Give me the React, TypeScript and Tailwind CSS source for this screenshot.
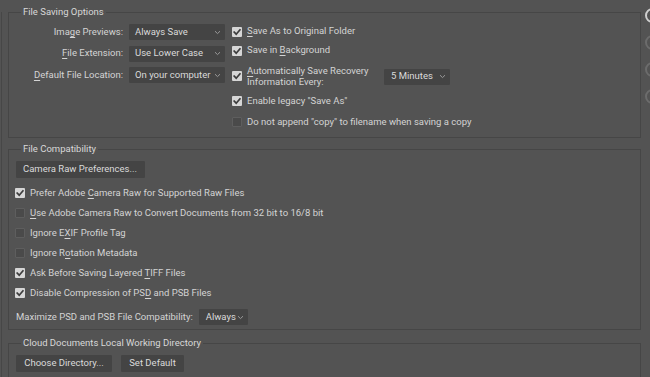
import React from "react";

const U = ({ children }: { children: React.ReactNode }) => (
  <span className="underline decoration-1 underline-offset-[1.5px]">{children}</span>
);

function Check({ checked }: { checked: boolean }) {
  return checked ? (
    <span className="flex h-[10px] w-[10px] shrink-0 items-center justify-center rounded-[1px] bg-[#d6d6d6]">
      <svg width="10" height="10" viewBox="0 0 10 10">
        <path d="M2.2 5.1 L4.2 7.2 L7.9 2.9" fill="none" stroke="#3c3c3c" strokeWidth="1.7" strokeLinecap="square" />
      </svg>
    </span>
  ) : (
    <span className="h-[10px] w-[10px] shrink-0 rounded-[1px] border border-[#5e5e5e] bg-[#4a4a4a]" />
  );
}

function Chevron() {
  return (
    <svg width="7" height="5" viewBox="0 0 7 5" className="shrink-0">
      <path d="M1 1.2 L3.5 3.6 L6 1.2" fill="none" stroke="#9a9a9a" strokeWidth="1" />
    </svg>
  );
}

function Select({ label, w, pl = 6 }: { label: string; w: string; pl?: number }) {
  return (
    <div
      className={`flex h-[16px] ${w} items-center justify-between rounded-[1px] bg-[#444444] pr-[4px] text-[#dadada]`}
      style={{ paddingLeft: pl }}
    >
      <span className="whitespace-nowrap">{label}</span>
      <Chevron />
    </div>
  );
}

function Group({
  title,
  className,
  children,
}: {
  title: string;
  className: string;
  children: React.ReactNode;
}) {
  return (
    <div className={`relative border border-[#464646] ${className}`}>
      <span className="absolute -top-[7px] left-[12px] bg-[#535353] px-[2px] leading-[12px] text-[#d8d8d8]">
        {title}
      </span>
      {children}
    </div>
  );
}

function CheckRow({ checked, children, h }: { checked: boolean; children: React.ReactNode; h: string }) {
  return (
    <div className={`flex ${h} items-center gap-[5px] pl-[6px]`}>
      <Check checked={checked} />
      <span className="whitespace-nowrap">{children}</span>
    </div>
  );
}

export default function App() {
  return (
    <div className="relative h-[377px] w-[650px] overflow-hidden bg-[#535353] font-[Roboto,sans-serif] text-[9.5px] text-[#d4d4d4]">
      <div className="ml-[1px] h-full border-l border-[#474747] pl-[6px]">
        {/* File Saving Options */}
        <Group title="File Saving Options" className="mt-[12px] h-[126px] w-[633px]">
          <div className="flex pt-[11px]">
            <div className="flex flex-col gap-[5.5px]">
              {[
                [<>Ima<U>g</U>e Previews:</>, "Always Save"],
                [<><U>F</U>ile Extension:</>, "Use Lower Case"],
                [<><U>D</U>efault File Location:</>, "On your computer"],
              ].map(([l, v], i) => (
                <div key={i} className="flex h-[16px] items-center">
                  <span className="w-[115px] whitespace-nowrap pr-[1px] text-right">{l}</span>
                  <div className="ml-[5px]">
                    <Select label={v as string} w="w-[96px]" />
                  </div>
                </div>
              ))}
            </div>
            <div className="ml-[1px] -mt-[2px] flex flex-col">
              <CheckRow checked h="h-[19px]">
                <U>S</U>ave As to Original Folder
              </CheckRow>
              <CheckRow checked h="h-[19px]">
                Save in <U>B</U>ackground
              </CheckRow>
              <div className="flex h-[31px] items-center pl-[6px]">
                <Check checked />
                <span className="ml-[5px] w-[137px] leading-[11px]">
                  <U>A</U>utomatically Save Recovery
                  <br />
                  Information Every:
                </span>
                <div className="mt-[2px]">
                  <Select label="5 Minutes" w="w-[66px]" pl={7} />
                </div>
              </div>
              <CheckRow checked h="h-[20px]">
                Enable legacy "Save As"
              </CheckRow>
              <CheckRow checked={false} h="h-[22px]">
                Do not append "copy" to filename when saving a copy
              </CheckRow>
            </div>
          </div>
        </Group>

        {/* File Compatibility */}
        <Group title="File Compatibility" className="mt-[11px] h-[181px] w-[633px]">
          <div className="flex flex-col pt-[11px]">
            <div className="ml-[7px] flex h-[17px] w-[129px] items-center rounded-[1px] bg-[#444444] pl-[7px] text-[#dadada]">
              Camera Raw Preferences...
            </div>
            <div className="mt-[5px] flex flex-col">
              <CheckRow checked h="h-[20px]">
                Prefer Adobe <U>C</U>amera Raw for Supported Raw Files
              </CheckRow>
              <CheckRow checked={false} h="h-[20px]">
                <U>U</U>se Adobe Camera Raw to Convert Documents from 32 bit to 16/8 bit
              </CheckRow>
              <CheckRow checked={false} h="h-[20px]">
                Ignore E<U>X</U>IF Profile Tag
              </CheckRow>
              <CheckRow checked={false} h="h-[20px]">
                Ignore R<U>o</U>tation Metadata
              </CheckRow>
              <CheckRow checked h="h-[20px]">
                Ask Before Saving Layered <U>T</U>IFF Files
              </CheckRow>
              <CheckRow checked h="h-[20px]">
                Disable Compression of PS<U>D</U> and PSB Files
              </CheckRow>
            </div>
            <div className="ml-[7px] mt-[6px] flex items-center">
              <span className="whitespace-nowrap">Maximize PSD and PSB File Compatibility:</span>
              <div className="ml-[6px]">
                <Select label="Always" w="w-[49px]" pl={7} />
              </div>
            </div>
          </div>
        </Group>

        {/* Cloud Documents */}
        <Group title="Cloud Documents Local Working Directory" className="mt-[13px] h-[60px] w-[633px]">
          <div className="ml-[7px] flex gap-[9px] pt-[11px]">
            <div className="flex h-[17px] w-[96px] items-center justify-center rounded-[1px] bg-[#444444] text-[#dadada]">
              Choose Directory...
            </div>
            <div className="flex h-[17px] w-[63px] items-center justify-center rounded-[1px] bg-[#444444] text-[#dadada]">
              Set Default
            </div>
          </div>
        </Group>
      </div>

      {/* partially visible radio buttons on right edge */}
      <div className="absolute left-[645px] top-[8px] flex flex-col gap-[12px]">
        <span className="h-[15px] w-[15px] rounded-full border-2 border-[#cfcfcf]" />
        <span className="h-[15px] w-[15px] rounded-full border-2 border-[#6c6c6c]" />
        <span className="h-[15px] w-[15px] rounded-full border-2 border-[#6c6c6c]" />
        <span className="h-[15px] w-[15px] rounded-full border-2 border-[#6c6c6c]" />
      </div>
    </div>
  );
}
